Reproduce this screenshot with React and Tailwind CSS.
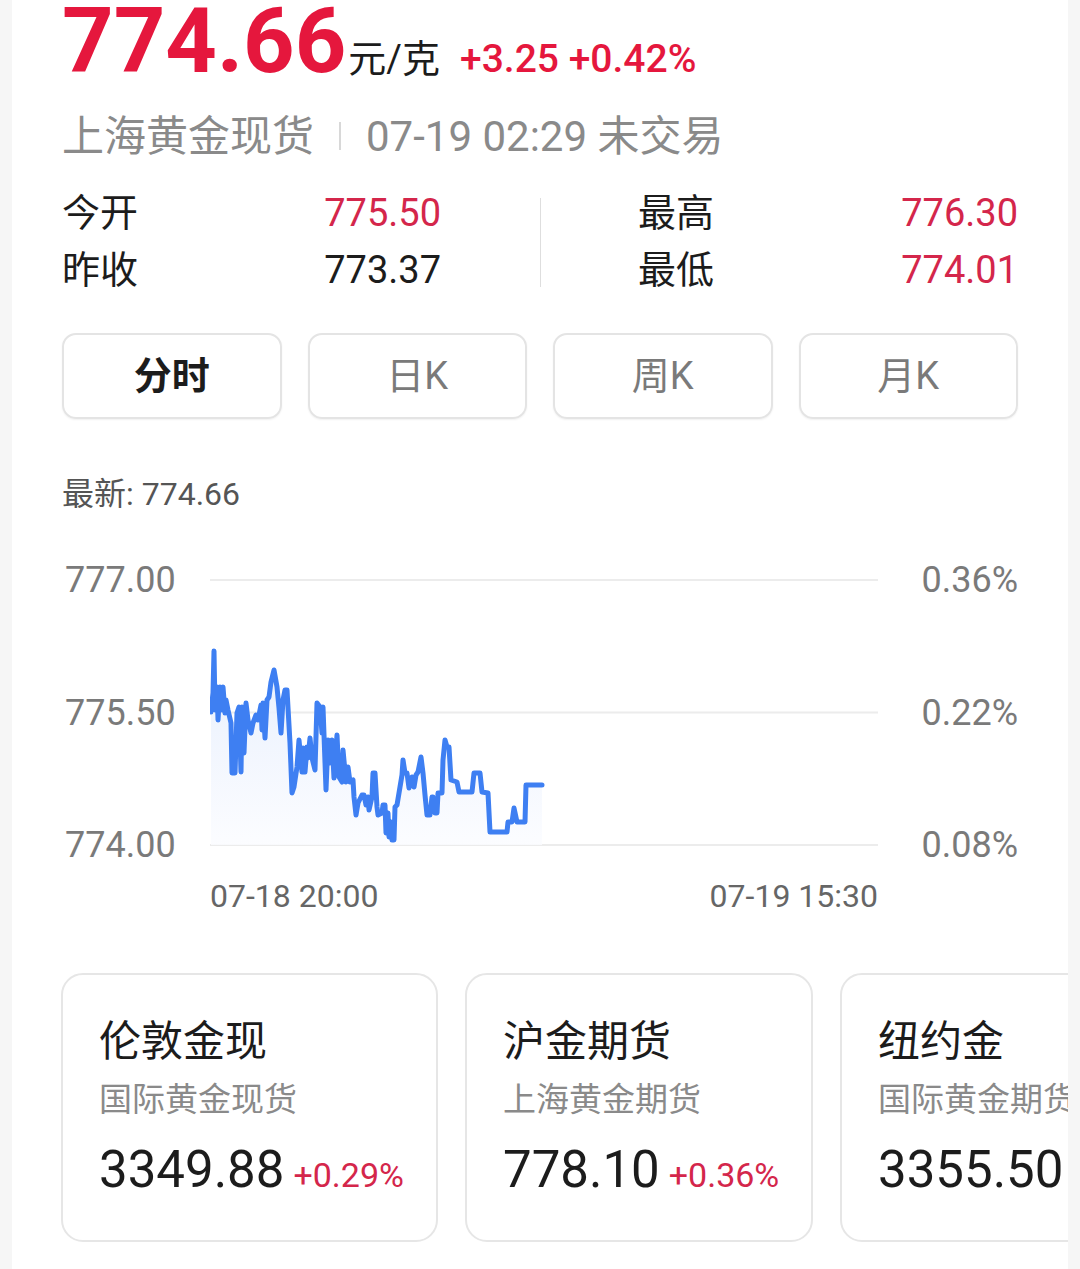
import React from 'react';

const pts = [
  [211,712],[213,693],[214,651],[215,710],[217,687],[218,720],[220,687],[222,710],[223,687],[225,713],[226,700],[228,710],[231,723],[232,773],[235,773],[237,713],[239,707],[241,772],[242,707],[244,753],[246,703],[248,720],[251,733],[253,723],[256,715],[258,720],[261,705],[262,730],[263,703],[265,738],[267,700],[269,697],[271,682],[274,670],[277,687],[279,708],[281,733],[283,700],[285,690],[287,690],[290,743],[292,793],[294,787],[297,767],[299,740],[302,772],[303,748],[305,772],[307,747],[308,758],[310,738],[312,758],[315,770],[317,703],[320,707],[322,733],[323,707],[326,790],[328,740],[330,763],[332,740],[334,778],[337,735],[339,777],[342,782],[343,750],[346,782],[348,767],[350,782],[353,780],[354,797],[356,815],[358,803],[362,795],[364,795],[366,805],[368,797],[369,810],[372,797],[373,773],[375,773],[377,807],[378,815],[382,813],[383,805],[385,805],[386,833],[388,813],[389,837],[391,822],[392,840],[394,840],[395,807],[397,805],[400,787],[402,775],[403,760],[405,773],[407,773],[409,788],[412,777],[414,787],[416,775],[418,772],[421,757],[423,773],[425,795],[427,815],[430,815],[432,797],[433,797],[435,813],[437,813],[438,793],[442,793],[443,760],[445,740],[447,747],[449,747],[451,780],[457,782],[459,792],[472,792],[474,773],[480,773],[482,792],[488,793],[490,832],[507,832],[508,822],[512,822],[514,808],[517,822],[525,822],[526,785],[542,785],
];

const line = pts.map(p => p.join(',')).join(' ');
const area = `211,845 ${line} 542,845`;

const tabs = [
  { label: '分时', active: true },
  { label: '日K' },
  { label: '周K' },
  { label: '月K' },
];

const cards = [
  { title: '伦敦金现', sub: '国际黄金现货', price: '3349.88', change: '+0.29%', w: 'w-[377px]' },
  { title: '沪金期货', sub: '上海黄金期货', price: '778.10', change: '+0.36%', w: 'w-[348px]' },
  { title: '纽约金', sub: '国际黄金期货', price: '3355.50', change: '', w: 'w-[340px]' },
];

const Stat = ({ label, value, red }) => (
  <div className="flex justify-between items-center h-[57px] leading-[57px]">
    <span className="text-[38px] text-[#1c1c1c]">{label}</span>
    <span className={`text-[38px] ${red ? 'text-[#d4264b]' : 'text-[#1c1c1c]'}`}>{value}</span>
  </div>
);

export default function App() {
  return (
    <div className="min-h-[1269px] bg-[#f6f6f6] px-[12px] font-[Roboto,'Noto_Sans_CJK_SC',sans-serif]">
      <div className="bg-white min-h-[1269px] overflow-hidden">
        <div className="px-[50px]">
          {/* price header */}
          <div className="flex items-baseline h-[84px]">
            <span className="text-[90px] leading-[84px] font-bold text-[#e5173d]">774.66</span>
            <span className="text-[38px] text-[#1c1c1c] ml-[2px]">元/克</span>
            <span className="text-[39px] font-medium text-[#e5173d] ml-[20px]">+3.25 +0.42%</span>
          </div>

          <div className="mt-[26px] flex items-center h-[52px] text-[42px] text-[#8a8a8a]">
            <span>上海黄金现货</span>
            <span className="mx-[25px] w-[2px] h-[28px] bg-[#d8d8d8]" />
            <span>07-19 02:29 未交易</span>
          </div>

          {/* stats */}
          <div className="mt-[23px] flex">
            <div className="w-[379px]">
              <Stat label="今开" value="775.50" red />
              <Stat label="昨收" value="773.37" />
            </div>
            <div className="ml-[99px] w-px h-[89px] self-center bg-[#dedede]" />
            <div className="ml-[97px] flex-1">
              <Stat label="最高" value="776.30" red />
              <Stat label="最低" value="774.01" red />
            </div>
          </div>

          {/* tabs */}
          <div className="mt-[34px] grid grid-cols-4 gap-[26px]">
            {tabs.map(t => (
              <div
                key={t.label}
                className="h-[86px] rounded-[14px] border-[2px] border-[#e4e4e4] shadow-[0_1px_2px_rgba(0,0,0,0.06)] flex items-center justify-center"
              >
                <span className={`text-[38px] ${t.active ? 'font-bold text-[#1c1c1c]' : 'text-[#7a7a7a]'}`}>{t.label}</span>
              </div>
            ))}
          </div>

          <div className="mt-[55px] h-[40px] leading-[40px] text-[32px] text-[#555]">最新: 774.66</div>

          {/* chart */}
          <div className="mt-[41px] flex h-[315px]">
            <div className="w-[148px] flex flex-col justify-between py-[5px] pl-[3px] text-[36px] text-[#7a7a7a]">
              <span className="h-[40px] leading-[40px]">777.00</span>
              <span className="h-[40px] leading-[40px]">775.50</span>
              <span className="h-[40px] leading-[40px]">774.00</span>
            </div>
            <svg width="668" height="315" viewBox="210 555 668 315" className="shrink-0">
              <defs>
                <linearGradient id="fill" x1="0" y1="0" x2="0" y2="1">
                  <stop offset="0" stopColor="#e4edfd" />
                  <stop offset="1" stopColor="#fbfcff" />
                </linearGradient>
              </defs>
              <line x1="210" y1="580" x2="878" y2="580" stroke="#ececec" strokeWidth="2" />
              <line x1="210" y1="712.5" x2="878" y2="712.5" stroke="#ececec" strokeWidth="2" />
              <line x1="210" y1="845" x2="878" y2="845" stroke="#ececec" strokeWidth="2" />
              <polygon points={area} fill="url(#fill)" opacity="0.85" />
              <polyline points={line} fill="none" stroke="#3e7ff2" strokeWidth="5" strokeLinejoin="round" strokeLinecap="round" />
            </svg>
            <div className="flex-1 flex flex-col justify-between items-end py-[5px] text-[36px] text-[#7a7a7a]">
              <span className="h-[40px] leading-[40px]">0.36%</span>
              <span className="h-[40px] leading-[40px]">0.22%</span>
              <span className="h-[40px] leading-[40px]">0.08%</span>
            </div>
          </div>

          <div className="mt-[6px] ml-[148px] w-[668px] flex justify-between h-[40px] leading-[40px] text-[32px] text-[#666]">
            <span>07-18 20:00</span>
            <span>07-19 15:30</span>
          </div>
        </div>

        {/* related cards */}
        <div className="mt-[57px] pl-[49px] flex gap-[27px] overflow-hidden pb-[27px]">
          {cards.map(c => (
            <div
              key={c.title}
              className={`${c.w} shrink-0 h-[269px] rounded-[22px] border-[2px] border-[#e6e6e6] px-[36px] pt-[43px]`}
            >
              <div className="h-[48px] leading-[48px] text-[42px] text-[#1c1c1c] whitespace-nowrap">{c.title}</div>
              <div className="mt-[14px] h-[40px] leading-[40px] text-[33px] text-[#8a8a8a] whitespace-nowrap">{c.sub}</div>
              <div className="mt-[20px] h-[60px] leading-[60px] flex items-baseline whitespace-nowrap">
                <span className="text-[51px] text-[#1c1c1c]">{c.price}</span>
                {c.change && <span className="ml-[9px] text-[34px] text-[#d4264b]">{c.change}</span>}
              </div>
            </div>
          ))}
        </div>
      </div>
    </div>
  );
}
